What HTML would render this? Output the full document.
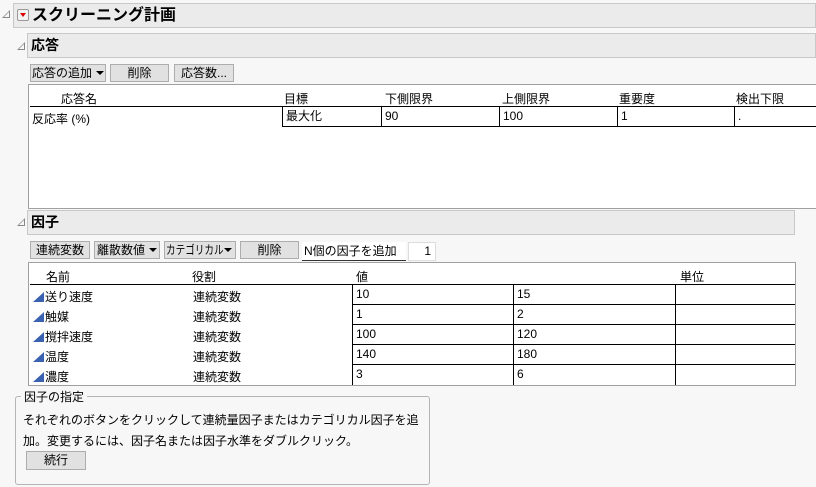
<!DOCTYPE html>
<html><head><meta charset="utf-8"><style>
*{box-sizing:border-box;margin:0;padding:0}
body{width:816px;height:487px;background:#f7f7f7;font-family:"Liberation Sans","Noto Sans CJK JP",sans-serif;font-size:12px;color:#000;position:relative;overflow:hidden}
.a{position:absolute;white-space:nowrap}
.hdr{position:absolute;background:#ebebeb;border:1px solid #c8c8c8;font-weight:bold}
.btn{position:absolute;height:18px;background:#e1e1e1;border:1px solid #adadad;text-align:center;line-height:16px;font-size:12px;white-space:nowrap;overflow:hidden}
.tri{position:absolute;width:0;height:0;border-left:8px solid transparent;border-bottom:8px solid #888}
.tri:after{content:"";position:absolute;left:-6px;top:2px;border-left:5px solid transparent;border-bottom:5px solid #f7f7f7}
.box{position:absolute;background:#fff;border:1px solid #a0a0a0}
.cell{position:absolute;border:1px solid #000;border-right:none;background:#fff;padding-left:3px;line-height:18px}
.ic{display:inline-block;width:0;height:0;border-left:11px solid transparent;border-bottom:10px solid #3a62b0;vertical-align:-1px;margin-right:1px}
.dd{display:inline-block;width:0;height:0;border-left:4px solid transparent;border-right:4px solid transparent;border-top:4px solid #000;vertical-align:2px;margin-left:4px}
</style></head><body>
<div class="tri" style="left:2px;top:10px"></div>
<div class="hdr" style="left:13px;top:3px;width:803px;height:25px;font-size:16px;line-height:23px;padding-left:18px">スクリーニング計画</div>
<div class="a" style="left:17px;top:9px;width:12px;height:12px;border:1px solid #999;background:#f4f4f4;border-radius:2px"><div class="a" style="left:2px;top:3px;border-left:3px solid transparent;border-right:3px solid transparent;border-top:4px solid #d00"></div></div>

<div class="tri" style="left:17px;top:42px"></div>
<div class="hdr" style="left:27px;top:33px;width:789px;height:25px;font-size:14px;line-height:23px;padding-left:3px">応答</div>
<div class="btn" style="left:30px;top:64px;width:76px">応答の追加<span class="dd"></span></div>
<div class="btn" style="left:110px;top:64px;width:59px">削除</div>
<div class="btn" style="left:174px;top:64px;width:60px">応答数...</div>
<div class="box" style="left:28px;top:84px;width:790px;height:125px"></div>
<div class="a" style="left:61px;top:90px">応答名</div>
<div class="a" style="left:284px;top:90px">目標</div>
<div class="a" style="left:385px;top:90px">下側限界</div>
<div class="a" style="left:502px;top:90px">上側限界</div>
<div class="a" style="left:619px;top:90px">重要度</div>
<div class="a" style="left:736px;top:90px">検出下限</div>
<div class="a" style="left:30px;top:106px;width:786px;height:1px;background:#000"></div>
<div class="a" style="left:32px;top:110px">反応率 (%)</div>
<div class="cell" style="left:282px;top:106px;width:99px;height:21px">最大化</div>
<div class="cell" style="left:381px;top:106px;width:118px;height:21px">90</div>
<div class="cell" style="left:499px;top:106px;width:118px;height:21px">100</div>
<div class="cell" style="left:617px;top:106px;width:117px;height:21px">1</div>
<div class="cell" style="left:734px;top:106px;width:82px;height:21px">.</div>

<div class="tri" style="left:17px;top:218px"></div>
<div class="hdr" style="left:27px;top:210px;width:768px;height:25px;font-size:14px;line-height:23px;padding-left:3px">因子</div>
<div class="btn" style="left:30px;top:241px;width:60px">連続変数</div>
<div class="btn" style="left:94px;top:241px;width:66px">離散数値<span class="dd"></span></div>
<div class="btn" style="left:164px;top:241px;width:72px;text-align:left"><span class="a" style="left:1px;top:0;transform:scaleX(0.8);transform-origin:0 0">カテゴリカル</span><span class="a" style="left:59px;top:6px;border-left:4px solid transparent;border-right:4px solid transparent;border-top:4px solid #000"></span></div>
<div class="btn" style="left:240px;top:241px;width:59px">削除</div>
<div class="a" style="left:302px;top:242px;width:104px;height:19px;border-bottom:1px solid #333;background:#fff;padding-left:2px">N個の因子を追加</div>
<div class="a" style="left:408px;top:242px;width:28px;height:19px;background:#fff;border:1px solid #ddd;text-align:right;padding-right:4px;line-height:17px">1</div>
<div class="box" style="left:28px;top:262px;width:768px;height:124px"></div>
<div class="a" style="left:46px;top:268px">名前</div>
<div class="a" style="left:192px;top:268px">役割</div>
<div class="a" style="left:356px;top:268px">値</div>
<div class="a" style="left:680px;top:268px">単位</div>
<div class="a" style="left:30px;top:284px;width:765px;height:1px;background:#000"></div>
<div class="a" style="left:33px;top:288px"><span class="ic"></span>送り速度</div>
<div class="a" style="left:33px;top:308px"><span class="ic"></span>触媒</div>
<div class="a" style="left:33px;top:328px"><span class="ic"></span>撹拌速度</div>
<div class="a" style="left:33px;top:348px"><span class="ic"></span>温度</div>
<div class="a" style="left:33px;top:368px"><span class="ic"></span>濃度</div>
<div class="a" style="left:193px;top:287px;line-height:20px">連続変数<br>連続変数<br>連続変数<br>連続変数<br>連続変数</div>
<div class="cell" style="left:352px;top:284px;width:161px;height:21px">10</div><div class="cell" style="left:513px;top:284px;width:162px;height:21px">15</div><div class="cell" style="left:675px;top:284px;width:120px;height:21px"></div>
<div class="cell" style="left:352px;top:304px;width:161px;height:21px">1</div><div class="cell" style="left:513px;top:304px;width:162px;height:21px">2</div><div class="cell" style="left:675px;top:304px;width:120px;height:21px"></div>
<div class="cell" style="left:352px;top:324px;width:161px;height:21px">100</div><div class="cell" style="left:513px;top:324px;width:162px;height:21px">120</div><div class="cell" style="left:675px;top:324px;width:120px;height:21px"></div>
<div class="cell" style="left:352px;top:344px;width:161px;height:21px">140</div><div class="cell" style="left:513px;top:344px;width:162px;height:21px">180</div><div class="cell" style="left:675px;top:344px;width:120px;height:21px"></div>
<div class="cell" style="left:352px;top:364px;width:161px;height:21px;border-bottom:none">3</div><div class="cell" style="left:513px;top:364px;width:162px;height:21px;border-bottom:none">6</div><div class="cell" style="left:675px;top:364px;width:120px;height:21px;border-bottom:none"></div>

<div class="a" style="left:15px;top:396px;width:415px;height:89px;border:1px solid #b4b4b4;border-radius:3px"></div>
<div class="a" style="left:21px;top:388px;background:#f7f7f7;padding:0 3px">因子の指定</div>
<div class="a" style="left:23px;top:410px;line-height:21px;width:410px">それぞれのボタンをクリックして連続量因子またはカテゴリカル因子を追<br>加。変更するには、因子名または因子水準をダブルクリック。</div>
<div class="btn" style="left:26px;top:451px;width:60px;height:19px">続行</div>
</body></html>
